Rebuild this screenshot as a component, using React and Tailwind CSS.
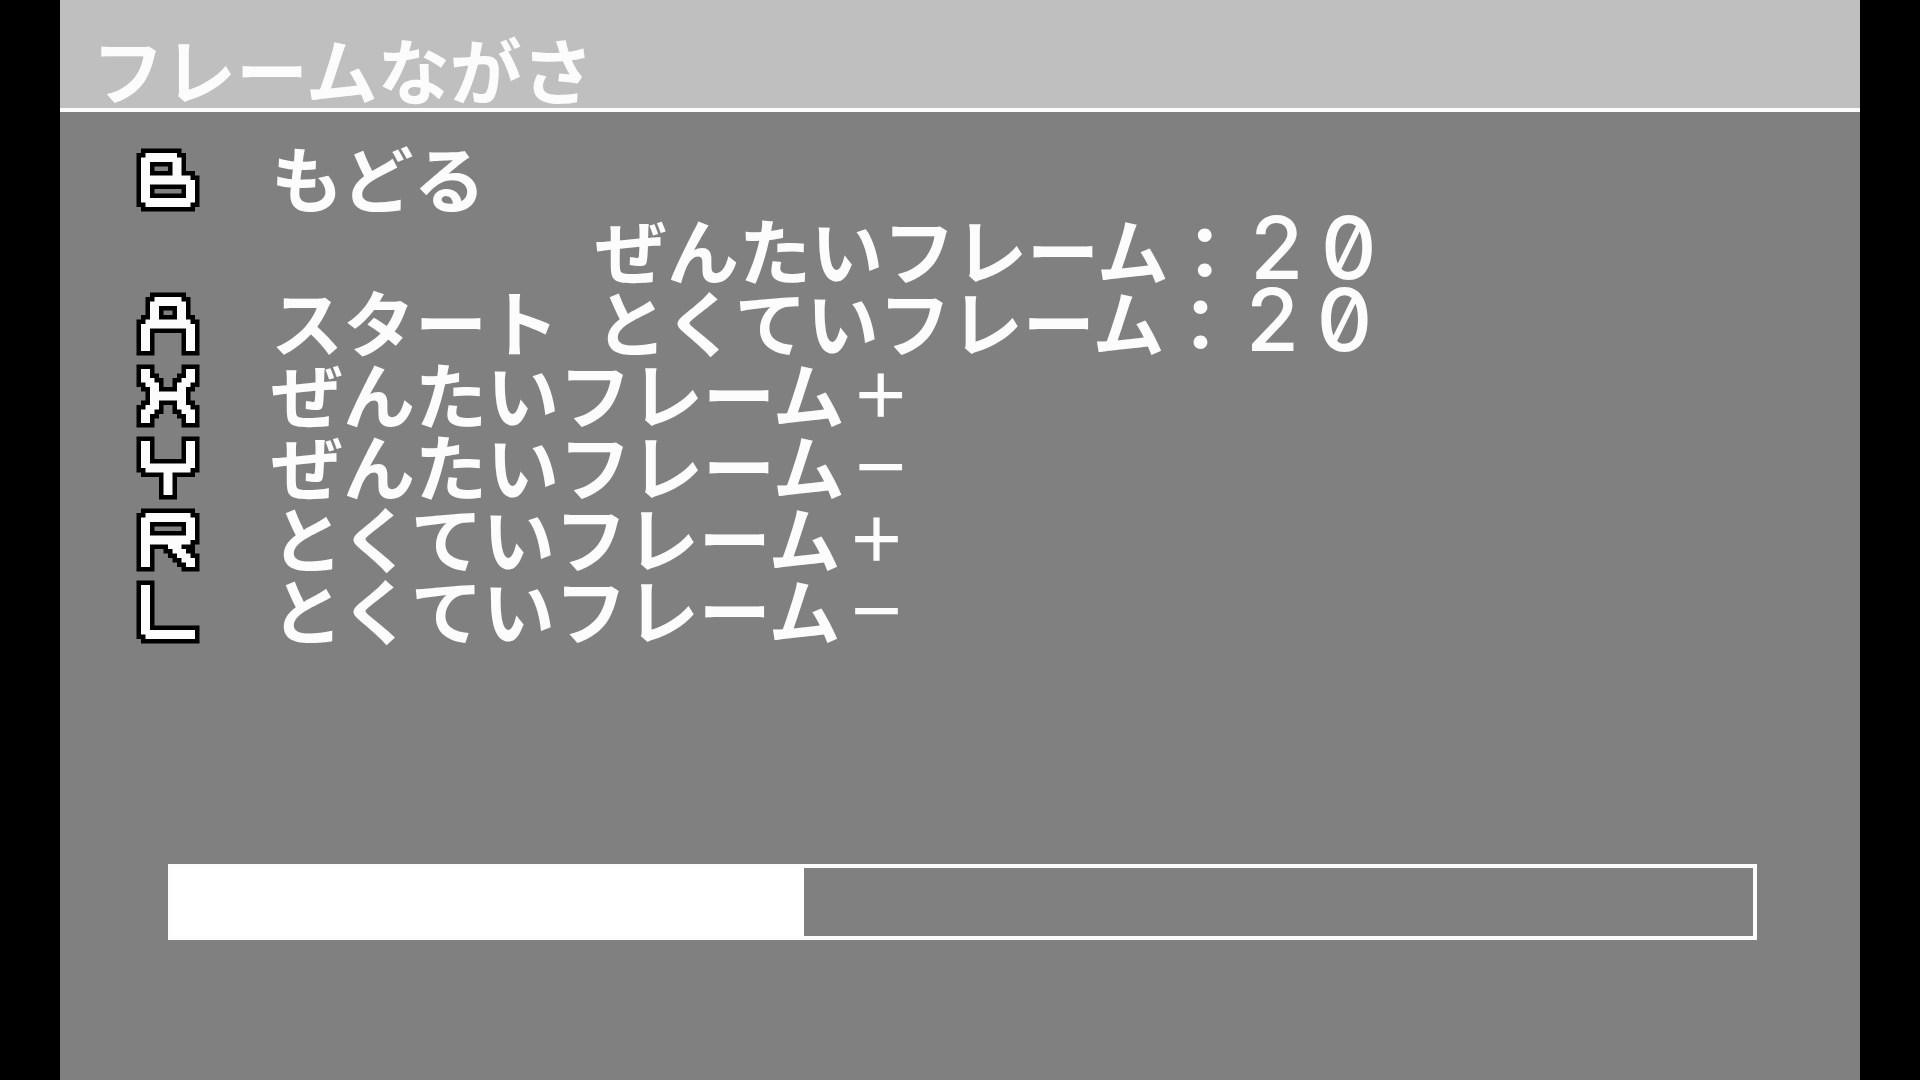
import React from "react";

// Pixel maps of the pad buttons: # is the outline, o is the fill.
const glyphs = {
  B: [
    ".#########....",
    "##ooooooo##...",
    "#ooooooooo#...",
    "#oo#####oo#...",
    "#oo#...#oo#...",
    "#oo#####oo###.",
    "#ooooooooooo##",
    "#oooooooooooo#",
    "#oo########oo#",
    "#oo#......#oo#",
    "#oo########oo#",
    "#oooooooooooo#",
    "##oooooooooo##",
    ".############.",
  ],
  A: [
    "...########...",
    "..##oooooo##..",
    "..#oooooooo#..",
    "..#oo####oo#..",
    "..#oo#..#oo#..",
    ".##oo####oo##.",
    "##oooooooooo##",
    "#oooooooooooo#",
    "#oo########oo#",
    "#oo#......#oo#",
    "#oo#......#oo#",
    "#oo#......#oo#",
    "#oo#......#oo#",
    "####......####",
  ],
  X: [
    "####......####",
    "#oo#......#oo#",
    "#oo##....##oo#",
    "#ooo##..##ooo#",
    "##ooo#..#ooo##",
    ".##oo####oo##.",
    "..#oooooooo#..",
    "..#oooooooo#..",
    ".##oo####oo##.",
    "##ooo#..#ooo##",
    "#ooo##..##ooo#",
    "#oo##....##oo#",
    "#oo#......#oo#",
    "####......####",
  ],
  Y: [
    "####......####",
    "#oo#......#oo#",
    "#oo#......#oo#",
    "#oo#......#oo#",
    "#oo#......#oo#",
    "#oo########oo#",
    "#oooooooooooo#",
    "##oooooooooo##",
    ".#####oo#####.",
    ".....#oo#.....",
    ".....#oo#.....",
    ".....#oo#.....",
    ".....#oo#.....",
    ".....####.....",
  ],
  R: [
    ".############.",
    "##oooooooooo##",
    "#oooooooooooo#",
    "#oo########oo#",
    "#oo#......#oo#",
    "#oo########oo#",
    "#oooooooooooo#",
    "#ooooooooooo##",
    "#oo####ooo###.",
    "#oo#..##ooo##.",
    "#oo#...##ooo##",
    "#oo#....##ooo#",
    "#oo#.....##oo#",
    "####......####",
  ],
  L: [
    "####..........",
    "#oo#..........",
    "#oo#..........",
    "#oo#..........",
    "#oo#..........",
    "#oo#..........",
    "#oo#..........",
    "#oo#..........",
    "#oo#..........",
    "#oo###########",
    "#oo###########",
    "#oooooooooooo#",
    "##ooooooooooo#",
    ".#############",
  ],
};
glyphs.L[9] = "#oo#..........";

const toPath = (rows, pattern) =>
  rows
    .flatMap((row, y) =>
      [...row.matchAll(pattern)].map(
        (run) => `M${run.index + 1} ${y + 1}h${run[0].length}v1h-${run[0].length}z`
      )
    )
    .join("");

const PadIcon = ({ name }) => (
  <svg viewBox="0 0 16 16" className="size-[72px] shrink-0" aria-hidden="true">
    <path d={toPath(glyphs[name], /[#o]+/g)} fill="#000" />
    <path d={toPath(glyphs[name], /o+/g)} fill="#fcfcfc" />
  </svg>
);

const Action = ({ pad, label, sign, wide }) => (
  <button
    type="button"
    className={
      wide
        ? "col-span-2 flex h-[72px] items-start text-left"
        : "flex h-[72px] items-start text-left"
    }
  >
    <PadIcon name={pad} />
    <span className="ml-[67px]">{label}</span>
    {sign && (
      <span className="w-[72px] text-center text-[60px]">{sign}</span>
    )}
  </button>
);

const Readout = ({ label, value }) => (
  <p className="col-start-2 flex h-[72px]">
    <span>{label}：</span>
    {[...value].map((digit, i) => (
      <span
        key={i}
        className="w-[72px] text-center font-['Inter'] text-[86px] font-medium slashed-zero"
      >
        {digit}
      </span>
    ))}
  </p>
);

const App = () => {
  const total = 20;
  const target = 20;
  const progress = 40;

  return (
    <div className="min-h-screen bg-black px-[60px]">
      <div className="flex min-h-screen flex-col bg-[#808080] font-['Noto_Sans_CJK_JP',sans-serif] text-[72px] leading-[64px] font-bold whitespace-nowrap text-[#fcfcfc]">
        <header className="border-b-4 border-[#fcfcfc] bg-[#bfbfbf] pt-9 pb-2 pl-8">
          <h1>フレームながさ</h1>
        </header>

        <main className="pt-8">
          <div className="grid grid-cols-[463px_1fr] px-[72px]">
            <Action pad="B" label="もどる" wide />
            <Readout label="ぜんたいフレーム" value={String(total)} />
            <Action pad="A" label="スタート" />
            <Readout label="とくていフレーム" value={String(target)} />
            <Action pad="X" label="ぜんたいフレーム" sign="＋" wide />
            <Action pad="Y" label="ぜんたいフレーム" sign="－" wide />
            <Action pad="R" label="とくていフレーム" sign="＋" wide />
            <Action pad="L" label="とくていフレーム" sign="－" wide />
          </div>

          <div
            role="progressbar"
            aria-valuenow={progress}
            aria-valuemin={0}
            aria-valuemax={100}
            className="mt-[216px] mr-[103px] ml-[108px] h-[76px] border-4 border-[#fcfcfc]"
          >
            <div
              className="h-full bg-white"
              style={{ width: `${progress}%` }}
            />
          </div>
        </main>
      </div>
    </div>
  );
};

export default App;
